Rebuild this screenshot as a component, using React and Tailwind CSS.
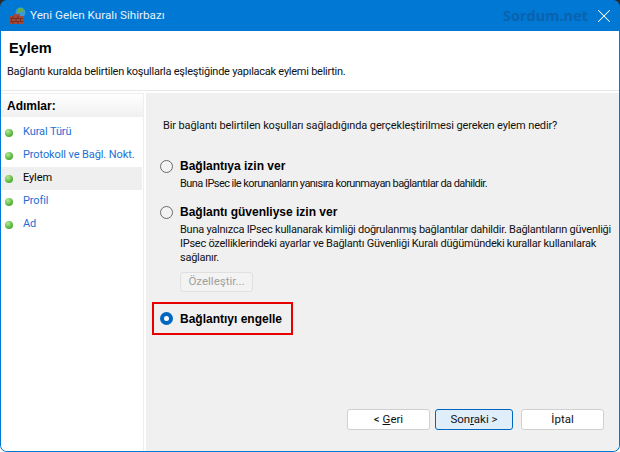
import React from 'react';
import { X } from 'lucide-react';

const steps = [
  { label: 'Kural Türü' },
  { label: 'Protokoll ve Bağl. Nokt.' },
  { label: 'Eylem', active: true },
  { label: 'Profil' },
  { label: 'Ad' },
];

function FirewallIcon() {
  return (
    <svg width="18" height="18" viewBox="0 0 18 18">
      <circle cx="11.5" cy="5.5" r="5" fill="#3f9ad6" />
      <path d="M9 2c2-2 4-1 5 0s0 3-2 3-1 2-3 1z" fill="#5fb04a" />
      <path d="M1 9h4V7h6v2h3v8H1z" fill="#a5493a" />
      <path d="M1 11.5h13M1 14.5h13M4 9v2.5M9 9v2.5M2.5 11.5v3M7 11.5v3M11.5 11.5v3M4 14.5v2.5M9 14.5v2.5" stroke="#6e2a20" strokeWidth="0.8" fill="none" />
    </svg>
  );
}

function StepDot() {
  return <span className="w-[8px] h-[8px] rounded-full shrink-0 bg-[radial-gradient(circle_at_35%_30%,#b5e89a,#4caf2f_70%)]" />;
}

function Radio({ checked }) {
  if (checked) {
    return (
      <span className="w-[13px] h-[13px] rounded-full bg-[#0067c0] flex items-center justify-center shrink-0">
        <span className="w-[5px] h-[5px] rounded-full bg-white" />
      </span>
    );
  }
  return <span className="w-[13px] h-[13px] rounded-full border border-[#6b6b6b] bg-[#f3f3f3] shrink-0" />;
}

function Option({ title, checked, children, descClass }) {
  return (
    <div>
      <div className="flex items-center gap-[7px] h-[16px]">
        <Radio checked={checked} />
        <span className="font-['Liberation_Sans',sans-serif] font-bold text-[12px] text-black">{title}</span>
      </div>
      {children && <p className={descClass}>{children}</p>}
    </div>
  );
}

function WizardButton({ children, className }) {
  return (
    <button className={className}>
      {children}
    </button>
  );
}

export default function App() {
  return (
    <div className="w-[620px] h-[452px] bg-gradient-to-b from-[#2a2a2a] to-white overflow-hidden">
      <div className="w-full h-full bg-[#0078d4] font-['Roboto',Arial,sans-serif] flex flex-col rounded-[7px] overflow-hidden">
        {/* title bar */}
        <div className="h-[31px] shrink-0 flex items-center pl-[9px] pr-[5px] text-white">
          <FirewallIcon />
          <span className="ml-[3px] text-[11.7px] text-[#e6f1fb]">Yeni Gelen Kuralı Sihirbazı</span>
          <span className="ml-auto mr-[5px] font-bold text-[14.5px] text-[#0b62ad] font-['Open_Sans',sans-serif]">Sordum.net</span>
          <X size={22} strokeWidth={1.1} />
        </div>

        <div className="flex-1 min-h-0 ml-[1px] mr-[1px] mb-[1px] bg-white flex flex-col rounded-b-[6px] overflow-hidden">
          <div className="h-[60px] shrink-0 border-b border-[#e8e8e8]">
            <h1 className="pl-[8px] pt-[8px] text-[14.5px] leading-[18px] font-bold text-black font-['Liberation_Sans',sans-serif]">Eylem</h1>
            <p className="pl-[6px] pt-[8px] text-[11px] tracking-[-0.25px] leading-[14px] text-[#111]">
              Bağlantı kuralda belirtilen koşullarla eşleştiğinde yapılacak eylemi belirtin.
            </p>
          </div>

          <div className="flex-1 min-h-0 flex pt-[2px]">
            {/* steps */}
            <div className="w-[143px] shrink-0 border-r border-t border-[#eeeeee] bg-white">
              <div className="h-[23px] flex items-center pl-[6px] text-[12px] font-bold text-black font-['Liberation_Sans',sans-serif] bg-gradient-to-b from-white to-[#f0f0f0]">
                Adımlar:
              </div>
              <ul className="mt-[4px]">
                {steps.map((step) => (
                  <li
                    key={step.label}
                    className={
                      step.active
                        ? 'h-[23px] w-[141px] flex items-center pl-[4px] gap-[10px] text-[11px] tracking-[-0.1px] whitespace-nowrap bg-[#efefef] text-black'
                        : 'h-[23px] w-[141px] flex items-center pl-[4px] gap-[10px] text-[11px] tracking-[-0.1px] whitespace-nowrap text-[#1c6fd6]'
                    }
                  >
                    <StepDot />
                    {step.label}
                  </li>
                ))}
              </ul>
            </div>

            {/* main panel */}
            <div className="flex-1 min-w-0 ml-[2px] bg-[#f0f0f0] flex flex-col pl-[14px] pr-[6px]">
              <p className="pt-[26px] pl-[3px] text-[11px] tracking-[-0.12px] leading-[14px] text-[#111]">
                Bir bağlantı belirtilen koşulları sağladığında gerçekleştirilmesi gereken eylem nedir?
              </p>
              <div className="mt-[25px] flex flex-col gap-[13px]">
                <Option
                  title="Bağlantıya izin ver"
                  descClass="ml-[20px] mt-[3px] text-[11px] tracking-[-0.55px] leading-[14px] text-[#111] w-[434px]"
                >
                  Buna IPsec ile korunanların yanısıra korunmayan bağlantılar da dahildir.
                </Option>
                <div>
                  <Option
                    title="Bağlantı güvenliyse izin ver"
                    descClass="ml-[20px] mt-[3px] text-[11px] tracking-[-0.25px] leading-[14px] text-[#111] w-[436px]"
                  >
                    Buna yalnızca IPsec kullanarak kimliği doğrulanmış bağlantılar dahildir. Bağlantıların güvenliği IPsec özelliklerindeki ayarlar ve Bağlantı Güvenliği Kuralı düğümündeki kurallar kullanılarak sağlanır.
                  </Option>
                  <button className="ml-[20px] mt-[7px] w-[73px] h-[20px] rounded-[3px] border border-[#e0e0e0] bg-[#f3f3f3] text-[11.5px] text-[#a0a0a0] block">
                    Özelleştir...
                  </button>
                </div>
                <div className="w-[141px] h-[33px] -ml-[8px] -mt-[3px] border-2 border-[#e80000] flex items-center pl-[6px]">
                  <Option title="Bağlantıyı engelle" checked />
                </div>
              </div>
              <div className="mt-auto mb-[21px] flex justify-end pr-[9px]">
                <WizardButton className="w-[83px] h-[21px] mr-[5px] rounded-[3px] border border-[#d0d0d0] bg-white text-[11.5px] text-[#111] flex items-center justify-center">
                  <span>&lt; <u>G</u>eri</span>
                </WizardButton>
                <WizardButton className="w-[78px] h-[21px] mr-[8px] rounded-[3px] border border-[#0067c0] bg-[#e0eef9] text-[11.5px] text-[#111] flex items-center justify-center">
                  <span>Son<u>r</u>aki &gt;</span>
                </WizardButton>
                <WizardButton className="w-[83px] h-[21px] rounded-[3px] border border-[#d0d0d0] bg-white text-[11.5px] text-[#111] flex items-center justify-center">
                  İptal
                </WizardButton>
              </div>
            </div>
          </div>
        </div>
      </div>
    </div>
  );
}
